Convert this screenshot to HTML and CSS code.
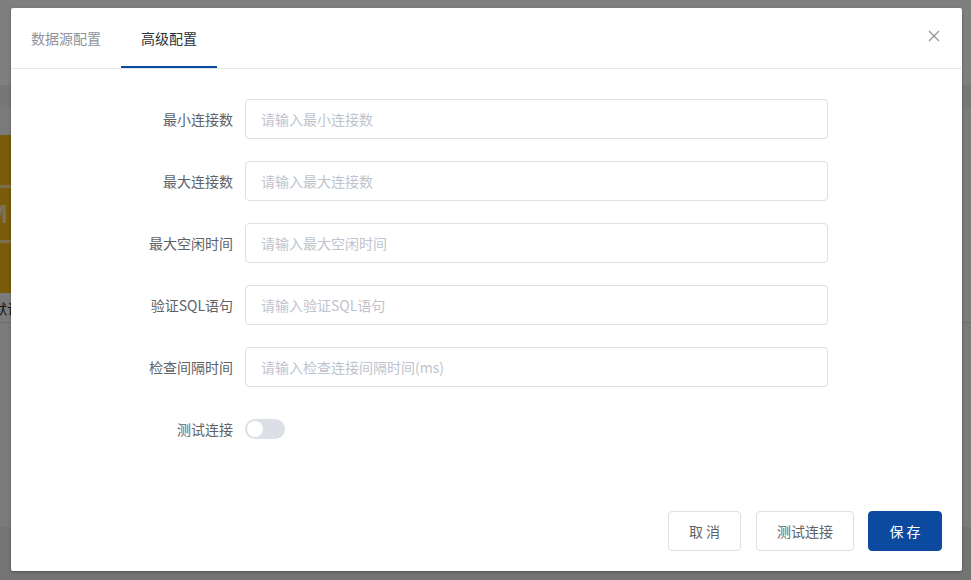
FILE: index.html
```html
<!DOCTYPE html>
<html lang="zh-CN">
<head>
<meta charset="utf-8">
<title>高级配置</title>
<link rel="stylesheet" href="styles.css">
</head>
<body>
<div class="bg">
  <div class="bg-top"></div>
  <div class="bg-band"></div>
  <div class="bg-main">
    <div class="bg-card">
      <div class="bg-card-line"></div>
      <div class="bg-card-logo">M</div>
      <div class="bg-card-line"></div>
    </div>
    <div class="bg-card-name">默认</div>
  </div>
  <div class="bg-bottom"></div>
</div>
<div class="mask"></div>
<div class="dialog">
  <div class="dialog-header">
    <div class="tabs">
      <div class="tab">数据源配置</div>
      <div class="tab tab-active">高级配置</div>
    </div>
    <button class="close" aria-label="关闭">
      <svg width="12" height="12" viewBox="0 0 12 12"><path d="M1 1L11 11M11 1L1 11" stroke="#909399" stroke-width="1.2" fill="none"/></svg>
    </button>
  </div>
  <form class="form">
    <div class="row">
      <label class="label">最小连接数</label>
      <input class="input" type="text" placeholder="请输入最小连接数">
    </div>
    <div class="row">
      <label class="label">最大连接数</label>
      <input class="input" type="text" placeholder="请输入最大连接数">
    </div>
    <div class="row">
      <label class="label">最大空闲时间</label>
      <input class="input" type="text" placeholder="请输入最大空闲时间">
    </div>
    <div class="row">
      <label class="label">验证SQL语句</label>
      <input class="input" type="text" placeholder="请输入验证SQL语句">
    </div>
    <div class="row">
      <label class="label">检查间隔时间</label>
      <input class="input" type="text" placeholder="请输入检查连接间隔时间(ms)">
    </div>
    <div class="row">
      <label class="label">测试连接</label>
      <span class="switch"><span class="switch-knob"></span></span>
    </div>
  </form>
  <div class="dialog-footer">
    <button class="btn btn-cancel">取 消</button>
    <button class="btn">测试连接</button>
    <button class="btn btn-primary">保 存</button>
  </div>
</div>
</body>
</html>
```

FILE: styles.css
```css
* { box-sizing: border-box; }
html, body { margin: 0; padding: 0; }
body {
  width: 971px;
  height: 580px;
  overflow: hidden;
  position: relative;
  font-family: "Noto Sans CJK SC", "Noto Sans", "Liberation Sans", sans-serif;
  font-size: 14px;
  background: #ffffff;
}

/* underlying page */
.bg { display: flex; flex-direction: column; height: 580px; }
.bg-top { height: 85px; background: #ffffff; }
.bg-band { height: 23px; background: #eeeeee; }
.bg-main { height: 419px; padding-top: 27px; background: #f6f6f6; }
.bg-card {
  width: 120px;
  height: 158px;
  background: #f2b614;
  display: flex;
  flex-direction: column;
  justify-content: center;
}
.bg-card-line { height: 3px; background: #ffffff; opacity: 0.55; }
.bg-card-logo {
  height: 52px;
  line-height: 52px;
  margin-left: -14px;
  color: #ffffff;
  opacity: 0.65;
  font-size: 26px;
  font-weight: bold;
  font-family: "Liberation Sans", sans-serif;
}
.bg-card-name {
  margin-left: -7px;
  height: 30px;
  line-height: 30px;
  color: #222;
  font-size: 14px;
  border-bottom: 1px solid #d8d8d8;
}
.bg-bottom { flex: 1; background: #e8e8e8; }

.mask {
  position: absolute;
  inset: 0;
  background: rgba(0, 0, 0, 0.5);
}

/* dialog */
.dialog {
  position: absolute;
  left: 11px;
  top: 8px;
  width: 951px;
  height: 563px;
  background: #ffffff;
  border-radius: 2px;
  box-shadow: 0 1px 3px rgba(0, 0, 0, 0.3);
  display: flex;
  flex-direction: column;
}
.dialog-header {
  height: 61px;
  border-bottom: 1px solid #e4e7ed;
  display: flex;
  justify-content: space-between;
  align-items: stretch;
}
.tabs { display: flex; }
.tab {
  padding: 0 20px;
  height: 60px;
  line-height: 60px;
  color: #909399;
  font-size: 14px;
}
.tab-active {
  color: #303133;
  border-bottom: 2px solid #0b4a9e;
}
.close {
  border: 0;
  background: transparent;
  padding: 0;
  width: 12px;
  height: 12px;
  margin: 22px 22px 0 0;
  display: flex;
}

.form {
  padding: 30px 0 0 114px;
  display: flex;
  flex-direction: column;
  gap: 22px;
  flex: 1;
  margin: 0;
}
.row { display: flex; align-items: center; height: 40px; }
.label {
  width: 120px;
  padding-right: 12px;
  text-align: right;
  color: #606266;
  font-size: 14px;
  margin-top: -1px;
}
.input {
  width: 583px;
  height: 40px;
  border: 1px solid #dcdfe6;
  border-radius: 4px;
  padding: 0 15px;
  font-family: inherit;
  font-size: 14px;
  color: #606266;
  outline: none;
}
.input::placeholder { color: #c0c4cc; }
.switch {
  width: 40px;
  height: 20px;
  border-radius: 10px;
  background: #dcdfe6;
  display: flex;
  align-items: center;
  padding-left: 2px;
}
.switch-knob {
  width: 16px;
  height: 16px;
  border-radius: 50%;
  background: #ffffff;
}

.dialog-footer {
  display: flex;
  justify-content: flex-end;
  gap: 14px;
  padding: 0 20px 20px 0;
}
.btn {
  height: 40px;
  padding: 0 20px;
  border: 1px solid #dcdfe6;
  border-radius: 4px;
  background: #ffffff;
  color: #606266;
  font-family: inherit;
  font-size: 14px;
}
.btn-cancel { width: 73px; padding: 0; margin-right: 1px; }
.btn-primary {
  width: 74px;
  padding: 0;
  background: #0b4a9e;
  border-color: #0b4a9e;
  color: #ffffff;
}
```
